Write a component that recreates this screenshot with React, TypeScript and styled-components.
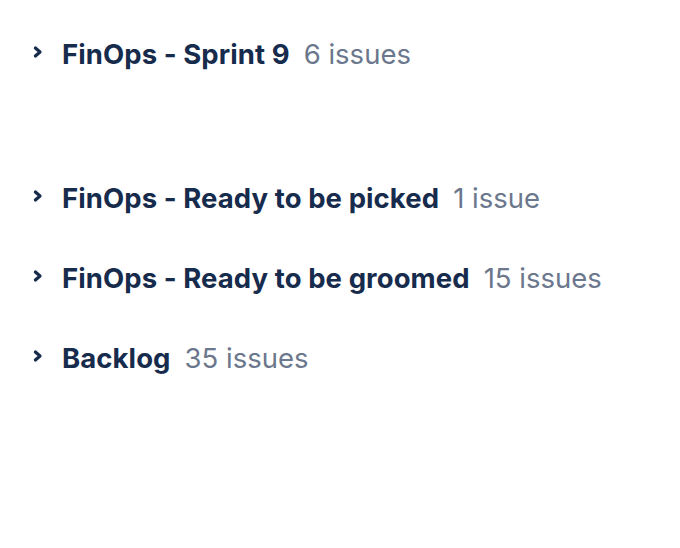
import React from 'react';
import styled, { createGlobalStyle } from 'styled-components';

const Global = createGlobalStyle`
  body {
    margin: 0;
    background: #fff;
    font-family: Inter, "Noto Sans", sans-serif;
  }
`;

const Page = styled.div`
  padding: 34px 0 0 30px;
  display: flex;
  flex-direction: column;
`;

const Group = styled.div<{ $gap: number }>`
  display: flex;
  flex-direction: column;
  margin-bottom: ${(p) => p.$gap}px;
`;

const Row = styled.div`
  display: flex;
  align-items: center;
  height: 40px;
  margin-bottom: 40px;
`;

const Chevron = styled.span`
  width: 32px;
  display: flex;
  align-items: center;
  margin-bottom: 4px;
  color: #172b4d;
`;

const Title = styled.span`
  font-size: 27.5px;
  font-weight: 700;
  letter-spacing: 0.08px;
  color: #172b4d;
  margin-right: 14px;
`;

const Count = styled.span`
  font-size: 27.5px;
  color: #6b778c;
`;

const sprints = [
  { name: 'FinOps - Sprint 9', count: '6 issues' },
];
const others = [
  { name: 'FinOps - Ready to be picked', count: '1 issue' },
  { name: 'FinOps - Ready to be groomed', count: '15 issues' },
  { name: 'Backlog', count: '35 issues' },
];

const Item = ({ name, count }: { name: string; count: string }) => (
  <Row>
    <Chevron>
      <svg width="14" height="14" viewBox="0 0 14 14">
        <path d="M5.4 3 L10 7 L5.4 11" fill="none" stroke="currentColor" strokeWidth="3.2" strokeLinecap="round" strokeLinejoin="round" />
      </svg>
    </Chevron>
    <Title>{name}</Title>
    <Count>{count}</Count>
  </Row>
);

export default function App() {
  return (
    <>
      <Global />
      <Page>
        <Group $gap={64}>
          {sprints.map((s) => <Item key={s.name} {...s} />)}
        </Group>
        <Group $gap={0}>
          {others.map((s) => <Item key={s.name} {...s} />)}
        </Group>
      </Page>
    </>
  );
}
